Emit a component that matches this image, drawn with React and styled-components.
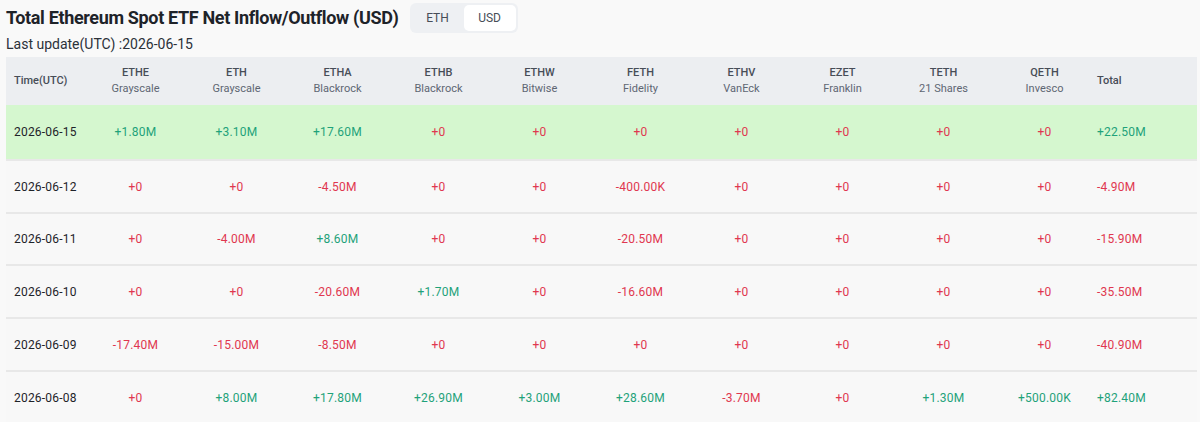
import React from 'react'
import styled, { createGlobalStyle } from 'styled-components'

const Global = createGlobalStyle`
  body {
    margin: 0;
    background: #f9f9f9;
    font-family: "Roboto", "Noto Sans", sans-serif;
    color: #1e2329;
  }
`

const Page = styled.div`
  padding: 2px 3px 0 6px;
`

const TitleRow = styled.div`
  display: flex;
  align-items: center;
  height: 31px;
`

const Title = styled.h1`
  margin: 0;
  font-size: 18px;
  font-weight: 700;
  letter-spacing: -0.35px;
  color: #1e2329;
`

const Toggle = styled.div`
  display: flex;
  margin-left: 11px;
  padding: 2px;
  background: #eef0f3;
  border-radius: 6px;
  height: 26px;
`

const ToggleBtn = styled.div`
  width: 52px;
  display: flex;
  align-items: center;
  justify-content: center;
  font-size: 12px;
  color: #474d57;
  border-radius: 5px;
  background: ${p => (p.$active ? '#ffffff' : 'transparent')};
`

const Updated = styled.div`
  font-size: 14px;
  color: #2b3139;
  height: 24px;
  line-height: 23px;
`

const Grid = styled.div`
  display: grid;
  grid-template-columns: 79px repeat(10, 101px) 1fr;
`

const HeadCell = styled.div`
  background: #eceef1;
  height: 48px;
  display: flex;
  flex-direction: column;
  justify-content: center;
  align-items: ${p => (p.$left ? 'flex-start' : 'center')};
  padding-left: ${p => (p.$left ? p.$pad : 0)}px;
  font-size: 11px;
  line-height: 16px;
  color: #474d57;
  font-weight: 500;
`

const Sub = styled.span`
  font-weight: 400;
  color: #5e6673;
`

const Cell = styled.div`
  height: ${p => p.$h}px;
  display: flex;
  align-items: center;
  justify-content: ${p => (p.$left ? 'flex-start' : 'center')};
  padding-left: ${p => (p.$left ? p.$pad : 0)}px;
  font-size: 12px;
  letter-spacing: 0.2px;
  background: ${p => (p.$hl ? '#d5f7cf' : '#f8f8f8')};
  border-bottom: ${p => (p.$last ? 'none' : '2px solid #e8e8e8')};
  box-sizing: border-box;
  color: ${p => (p.$tone === 'up' ? '#1fa27a' : p.$tone === 'down' ? '#e0374f' : '#1e2329')};
`

const funds = [
  ['ETHE', 'Grayscale'],
  ['ETH', 'Grayscale'],
  ['ETHA', 'Blackrock'],
  ['ETHB', 'Blackrock'],
  ['ETHW', 'Bitwise'],
  ['FETH', 'Fidelity'],
  ['ETHV', 'VanEck'],
  ['EZET', 'Franklin'],
  ['TETH', '21 Shares'],
  ['QETH', 'Invesco'],
]

const rows = [
  ['2026-06-15', '+1.80M', '+3.10M', '+17.60M', '+0', '+0', '+0', '+0', '+0', '+0', '+0', '+22.50M'],
  ['2026-06-12', '+0', '+0', '-4.50M', '+0', '+0', '-400.00K', '+0', '+0', '+0', '+0', '-4.90M'],
  ['2026-06-11', '+0', '-4.00M', '+8.60M', '+0', '+0', '-20.50M', '+0', '+0', '+0', '+0', '-15.90M'],
  ['2026-06-10', '+0', '+0', '-20.60M', '+1.70M', '+0', '-16.60M', '+0', '+0', '+0', '+0', '-35.50M'],
  ['2026-06-09', '-17.40M', '-15.00M', '-8.50M', '+0', '+0', '+0', '+0', '+0', '+0', '+0', '-40.90M'],
  ['2026-06-08', '+0', '+8.00M', '+17.80M', '+26.90M', '+3.00M', '+28.60M', '-3.70M', '+0', '+1.30M', '+500.00K', '+82.40M'],
]

const heights = [56, 53, 52, 53, 53, 52]

// zero flows are shown in red on the source site
function tone(v) {
  if (v === '+0') return 'down'
  return v.startsWith('+') ? 'up' : 'down'
}

export default function App() {
  return (
    <Page>
      <Global />
      <TitleRow>
        <Title>Total Ethereum Spot ETF Net Inflow/Outflow (USD)</Title>
        <Toggle>
          <ToggleBtn>ETH</ToggleBtn>
          <ToggleBtn $active>USD</ToggleBtn>
        </Toggle>
      </TitleRow>
      <Updated>Last update(UTC) :2026-06-15</Updated>
      <Grid>
        <HeadCell $left $pad={8}>Time(UTC)</HeadCell>
        {funds.map(([t, n]) => (
          <HeadCell key={t}>
            <span>{t}</span>
            <Sub>{n}</Sub>
          </HeadCell>
        ))}
        <HeadCell $left $pad={2}>Total</HeadCell>
        {rows.map((r, i) =>
          r.map((v, j) => (
            <Cell
              key={i + '-' + j}
              $h={heights[i]}
              $hl={i === 0}
              $last={i === rows.length - 1}
              $left={j === 0 || j === 11}
              $pad={j === 0 ? 8 : 2}
              $tone={j === 0 ? null : tone(v)}
            >
              {v}
            </Cell>
          ))
        )}
      </Grid>
    </Page>
  )
}
